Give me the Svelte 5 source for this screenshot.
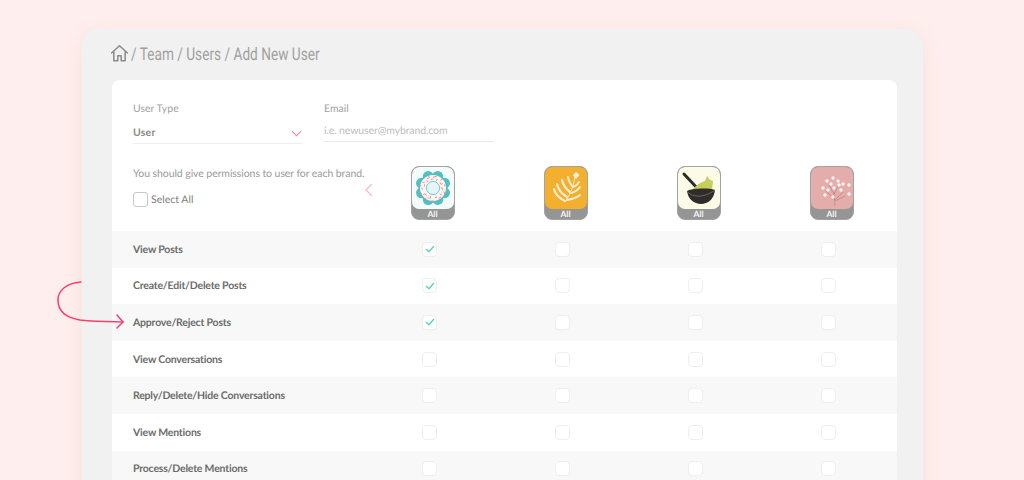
<script>
  const brands = ['donut', 'leaf', 'bowl', 'flower']
  const perms = [
    { name: 'View Posts', on: true },
    { name: 'Create/Edit/Delete Posts', on: true },
    { name: 'Approve/Reject Posts', on: true },
    { name: 'View Conversations', on: false },
    { name: 'Reply/Delete/Hide Conversations', on: false },
    { name: 'View Mentions', on: false },
    { name: 'Process/Delete Mentions', on: false },
  ]
  const sprinkles = Array.from({ length: 30 }, (_, i) => {
    const a = i * 2.4
    const r = 8.8 + (i % 5) * 1.05
    return { x: 21 + Math.cos(a) * r, y: 21 + Math.sin(a) * r, rot: i * 47 }
  })
  const scallops = Array.from({ length: 8 }, (_, i) => {
    const a = (i * Math.PI) / 4 + 0.39
    return { x: 21 + Math.cos(a) * 12.5, y: 21 + Math.sin(a) * 12.5 }
  })
  const dots = [
    [12, 21], [16, 14], [22, 11], [27, 14], [32, 17], [38, 18], [17, 23], [23, 21],
    [30, 23], [38, 27], [14, 28], [22, 30], [28, 18], [20, 17],
  ]
</script>

<div class="page">
  <div class="panel">
    <div class="crumbs">
      <svg class="home" viewBox="1 1 18 18" width="17" height="17">
        <path d="M1.5 9.5 10 1.8l8.5 7.7M4 8v9.6h4.2v-5.2h3.6v5.2H16V8" fill="none" stroke="#8b8b8b" stroke-width="1.6" stroke-linejoin="round" stroke-linecap="round" />
      </svg>
      <span>/ Team / Users / Add New User</span>
    </div>

    <div class="card">
      <div class="fields">
        <div class="field type">
          <div class="label">User Type</div>
          <div class="value">
            <b>User</b>
            <svg viewBox="0 0 12 7" width="11" height="7"><path d="M1 1l5 5 5-5" fill="none" stroke="#f9848f" stroke-width="1.2" /></svg>
          </div>
        </div>
        <div class="field email">
          <div class="label">Email</div>
          <div class="value"><span>i.e. newuser@mybrand.com</span></div>
        </div>
      </div>

      <div class="brandrow">
        <div class="intro">
          <p>You should give permissions to user for each brand.</p>
          <label class="all"><span class="box big"></span>Select All</label>
          <svg class="back" viewBox="0 0 8 14" width="8" height="14"><path d="M7 1 1 7l6 6" fill="none" stroke="#fbb9bf" stroke-width="1.2" /></svg>
        </div>
        {#each brands as brand}
          <div class="brandcell">
            <div class="brand">
              <svg class="logo" viewBox="0 0 42 42" width="42" height="42">
                {#if brand === 'donut'}
                  <rect width="42" height="42" fill="#f3fbfb" />
                  {#each scallops as s}
                    <circle cx={s.x} cy={s.y} r="5.4" fill="#52bfc0" />
                  {/each}
                  <circle cx="21" cy="21" r="14.5" fill="#52bfc0" />
                  <circle cx="21" cy="21" r="13" fill="#fdf4f4" />
                  <circle cx="21" cy="21" r="6.6" fill="#e3f6f6" stroke="#74cccc" stroke-width="1" />
                  {#each sprinkles as s}
                    <rect x={s.x - 1.1} y={s.y - 0.4} width="2.2" height="0.8" fill="#f0808c" transform="rotate({s.rot} {s.x} {s.y})" />
                  {/each}
                {:else if brand === 'leaf'}
                  <rect width="42" height="42" fill="#f3b02f" />
                  <g fill="none" stroke="#fdeccd" stroke-linecap="round">
                    <path d="M20 35C26 26 29 18 30 9" stroke-width="1" />
                    <path d="M20 34C14 31 10 27 9 22" stroke-width="2.2" />
                    <path d="M22 30C17 27 13 22 12 17" stroke-width="2.2" />
                    <path d="M25 25C21 22 18 18 17 13" stroke-width="2.2" />
                    <path d="M27 19C25 16 23 13 23 10" stroke-width="2" />
                    <path d="M22 33C27 32 32 31 35 28" stroke-width="2" />
                    <path d="M26 26C30 25 33 23 35 20" stroke-width="2" />
                    <path d="M28 20C31 19 33 17 34 15" stroke-width="1.8" />
                  </g>
                  <path d="M31 5l3.5 3-3.5 4-3-4Z" fill="#fff3dc" />
                {:else if brand === 'bowl'}
                  <rect width="42" height="42" fill="#fcfbe8" />
                  <path d="M6 7 20 22" stroke="#2b2b2b" stroke-width="3" stroke-linecap="round" />
                  <path d="M14 23c4-5 9-8 13-9l2-5 3 4 3 1-1 9Z" fill="#c5cf5c" />
                  <path d="M9 24c6-3 22-3 28-1-1 9-7 14-14 14S10 32 9 24Z" fill="#2f2c2a" />
                  <path d="M9 24c4 6 16 8 28-1" fill="none" stroke="#6a6760" stroke-width="1" />
                {:else}
                  <rect width="42" height="42" fill="#e4acab" />
                  <path d="M24 39 23 25M24 33 15 24M24 33l8-8M23 27l-5-9M23 27l4-8M24 34l10-5" stroke="#b97a7c" stroke-width="0.6" fill="none" />
                  {#each dots as d}
                    <circle cx={d[0]} cy={d[1]} r="1.7" fill="#fff6f5" />
                  {/each}
                {/if}
              </svg>
              <span class="tag">All</span>
            </div>
          </div>
        {/each}
      </div>

      {#each perms as p, row}
        <div class="row" class:band={row % 2 === 0}>
          <div class="name">{p.name}</div>
          {#each brands as _, col}
            <div class="cell">
              <span class="box">
                {#if p.on && col === 0}
                  <svg viewBox="0 0 10 8" width="10" height="8"><path d="M1 4l3 2.8L9 1" fill="none" stroke="#5ed2bd" stroke-width="1.4" /></svg>
                {/if}
              </span>
            </div>
          {/each}
        </div>
      {/each}
    </div>
  </div>

  <svg class="arrow" viewBox="0 0 72 50" width="72" height="50">
    <path d="M25 1C10 2 2 10 2 19c0 12 10 18 22 20 14 2 28 1 43 2" fill="none" stroke="#fb3d68" stroke-width="1.5" stroke-linecap="round" />
    <path d="M61 34l6 7-6 6" fill="none" stroke="#fb3d68" stroke-width="1.5" stroke-linecap="round" />
  </svg>
</div>

<style>
  :global(body) {
    margin: 0;
  }

  .page {
    position: relative;
    height: 480px;
    box-sizing: border-box;
    overflow: hidden;
    padding: 29px 101px 0 82px;
    background: #ffeeed;
    font-family: 'Lato', 'Noto Sans', sans-serif;
    text-rendering: geometricPrecision;
    color: #8f8f8f;
  }

  .panel {
    height: 600px;
    padding: 0 26px 0 30px;
    background: #f1f1f1;
    border-radius: 16px;
    box-shadow: 0 4px 18px rgba(200, 170, 170, 0.18);
  }

  .crumbs {
    display: flex;
    align-items: center;
    gap: 3px;
    height: 51px;
    box-sizing: border-box;
    font-family: 'Roboto', sans-serif;
    font-size: 17.5px;
    color: #a0a0a0;
  }

  .crumbs span {
    display: inline-block;
    transform: scaleX(0.78);
    transform-origin: left center;
    white-space: nowrap;
  }

  .home {
    flex: none;
    margin-left: -1px;
    margin-bottom: 2px;
  }

  .card {
    background: #fff;
    border-radius: 8px;
    overflow: hidden;
  }

  .fields {
    display: flex;
    gap: 22px;
    padding: 22px 0 0 21px;
    height: 44px;
  }

  .field {
    font-size: 10.5px;
  }

  .field.type {
    width: 169px;
  }

  .field.email {
    width: 170px;
  }

  .label {
    line-height: 14px;
    color: #a2a2a2;
  }

  .value {
    display: flex;
    align-items: center;
    justify-content: space-between;
    box-sizing: border-box;
    border-bottom: 1px solid #eceef2;
  }

  .type .value {
    height: 28px;
    padding-top: 7px;
  }

  .email .value {
    height: 26px;
    padding-top: 4px;
    color: #bdbdbd;
    letter-spacing: -0.12px;
    border-color: #e6e7f2;
  }

  .value b {
    color: #8a8a8a;
    font-weight: 700;
    letter-spacing: 0.2px;
  }

  .brandrow {
    display: grid;
    grid-template-columns: 251px repeat(4, 133px);
    height: 85px;
    box-sizing: border-box;
  }

  .intro {
    position: relative;
    padding: 0 0 0 21px;
  }

  .intro p {
    margin: 21px 0 11px;
    font-size: 10.5px;
    line-height: 14px;
    letter-spacing: -0.08px;
    white-space: nowrap;
    color: #9a9a9a;
  }

  .all {
    display: flex;
    align-items: center;
    gap: 3px;
    font-size: 10.5px;
    color: #7f7f7f;
  }

  .back {
    position: absolute;
    left: 253px;
    top: 37px;
  }

  .brandcell {
    display: flex;
    justify-content: center;
    padding-top: 20px;
  }

  .brand {
    position: relative;
    left: 3px;
    width: 44px;
    height: 54px;
    border: 1px solid #a3a3a3;
    border-radius: 8px;
    background: #959595;
    box-sizing: border-box;
    overflow: hidden;
  }

  .logo {
    display: block;
    border-radius: 7px;
    overflow: hidden;
  }

  .tag {
    display: block;
    text-align: center;
    font-size: 8.5px;
    line-height: 10px;
    font-weight: 700;
    color: #f4f4f4;
  }

  .row {
    display: grid;
    grid-template-columns: 251px repeat(4, 133px);
    align-items: center;
    height: 36.6px;
  }

  .band {
    background: #f8f8f8;
  }

  .name {
    padding: 1px 0 0 21px;
    font-size: 10.5px;
    font-weight: 700;
    letter-spacing: -0.2px;
    color: #6c6c6c;
    white-space: nowrap;
  }

  .cell {
    display: flex;
    justify-content: center;
  }

  .box {
    display: flex;
    align-items: center;
    justify-content: center;
    box-sizing: border-box;
    width: 15px;
    height: 15px;
    border: 1px solid #eeeeee;
    border-radius: 4px;
    background: #fff;
  }

  .box.big {
    border-color: #c8c8c8;
    border-radius: 3px;
  }

  .arrow {
    position: absolute;
    left: 56px;
    top: 281px;
  }
</style>
